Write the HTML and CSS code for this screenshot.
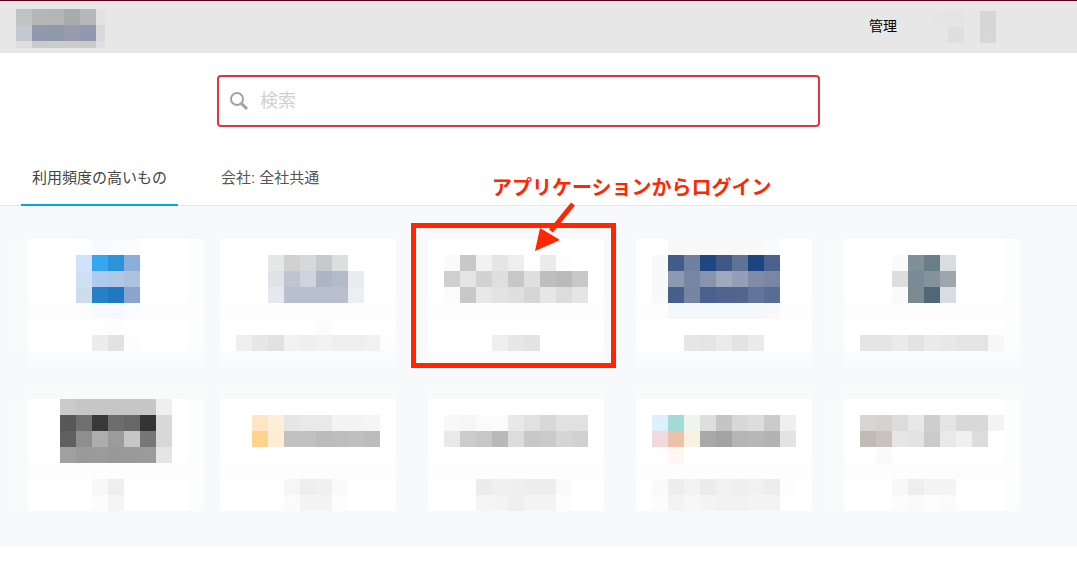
FILE: index.html
```html
<!DOCTYPE html>
<html lang="ja">
<head>
    <meta charset="UTF-8">
    <meta name="viewport" content="width=device-width, initial-scale=1.0">
    <title>アプリケーション</title>
    <link rel="stylesheet" href="styles.css">
</head>
<body>
    <header class="header">
        <a href="#" class="logo" aria-label="ホーム"><svg class="mosaic" data-tile="logo" width="89" height="39"></svg></a>
        <nav class="header-nav">
            <a href="#">管理</a>
            <a href="#" class="account" aria-label="アカウント"><svg class="mosaic" data-tile="account" width="64" height="34"></svg></a>
        </nav>
    </header>

    <form class="search" role="search">
        <svg class="search-icon" width="20" height="20" viewBox="0 0 20 20" fill="none" stroke="#a0a2a4">
            <circle cx="8" cy="8" r="6" stroke-width="2"/>
            <path d="M12.5 12.5L18 18" stroke-width="3"/>
        </svg>
        <input type="search" placeholder="検索" aria-label="検索">
    </form>

    <div class="tabs" role="tablist">
        <button type="button" class="tab active" role="tab" aria-selected="true">利用頻度の高いもの</button>
        <button type="button" class="tab" role="tab" aria-selected="false">会社: 全社共通</button>
    </div>

    <main class="apps">
        <a href="#" class="card" aria-label="アプリ 1"><svg class="mosaic" data-tile="app1" width="176" height="112"></svg></a>
        <a href="#" class="card" aria-label="アプリ 2"><svg class="mosaic" data-tile="app2" width="176" height="112"></svg></a>
        <div class="card-wrap">
            <a href="#" class="card" aria-label="アプリ 3"><svg class="mosaic" data-tile="app3" width="176" height="112"></svg></a>
            <div class="callout-box"></div>
            <svg class="callout-arrow" width="46" height="54" viewBox="0 0 46 54">
                <path d="M42 4L20 31" stroke="#ff2600" stroke-width="5"/>
                <path d="M4 51L9 28L29 40Z" fill="#ff2600"/>
            </svg>
            <div class="callout-text">アプリケーションからログイン</div>
        </div>
        <a href="#" class="card" aria-label="アプリ 4"><svg class="mosaic" data-tile="app4" width="176" height="112"></svg></a>
        <a href="#" class="card" aria-label="アプリ 5"><svg class="mosaic" data-tile="app5" width="176" height="112"></svg></a>
        <a href="#" class="card" aria-label="アプリ 6"><svg class="mosaic" data-tile="app6" width="176" height="112"></svg></a>
        <a href="#" class="card" aria-label="アプリ 7"><svg class="mosaic" data-tile="app7" width="176" height="112"></svg></a>
        <a href="#" class="card" aria-label="アプリ 8"><svg class="mosaic" data-tile="app8" width="176" height="112"></svg></a>
        <a href="#" class="card" aria-label="アプリ 9"><svg class="mosaic" data-tile="app9" width="176" height="112"></svg></a>
        <a href="#" class="card" aria-label="アプリ 10"><svg class="mosaic" data-tile="app10" width="176" height="112"></svg></a>
    </main>

    <script src="script.js"></script>
</body>
</html>
```
FILE: styles.css
```css
* {
    box-sizing: border-box;
}

body {
    margin: 0;
    font-family: "Liberation Sans", "Noto Sans CJK JP", sans-serif;
    font-size: 15px;
    color: #444;
    background-color: #fff;
}

a {
    color: inherit;
    text-decoration: none;
}

.header {
    display: flex;
    justify-content: space-between;
    align-items: flex-start;
    height: 53px;
    padding: 8px 81px 0 16px;
    border-top: 1px solid #5a0014;
    background-color: #e7e7e7;
}

.header-nav {
    display: flex;
    gap: 35px;
    padding-top: 2px;
    font-size: 14px;
    line-height: 30px;
    color: #000;
}

.mosaic {
    display: block;
    overflow: visible;
    shape-rendering: crispEdges;
}

.search {
    display: flex;
    align-items: center;
    gap: 11px;
    width: 56%;
    height: 52px;
    margin: 22px 0 0 217px;
    padding: 0 10px;
    border: 2px solid #dc3540;
    border-radius: 4px;
}

.search-icon {
    flex: none;
}

.search input {
    flex: 1;
    padding: 0;
    border: none;
    outline: none;
    background: none;
    font: inherit;
    font-size: 18px;
    color: #444;
}

.search input::placeholder {
    color: #d0d0d0;
}

.tabs {
    display: flex;
    gap: 32px;
    margin-top: 22px;
    padding-left: 21px;
    border-bottom: 1px solid #e6e7e8;
}

.tab {
    height: 57px;
    margin-bottom: -1px;
    padding: 0 11px;
    border: none;
    border-bottom: 2px solid transparent;
    background: none;
    font: inherit;
    color: #555;
    cursor: pointer;
}

.tab.active {
    border-bottom-color: #00a7e1;
    color: #444;
}

.apps {
    display: grid;
    grid-template-columns: 192px repeat(4, 208px);
    row-gap: 48px;
    padding: 33px 0 35px 28px;
    background-color: #f8f9fb;
}

.card {
    display: block;
    width: 176px;
    background-color: #fff;
}

.card-wrap {
    position: relative;
}

/* red callout over the third card */
.callout-box {
    position: absolute;
    top: -16px;
    left: -17px;
    width: 205px;
    height: 145px;
    border: 5px solid #ff2600;
    pointer-events: none;
}

.callout-arrow {
    position: absolute;
    top: -39px;
    left: 103px;
}

.callout-text {
    position: absolute;
    top: -67px;
    left: 64px;
    font-family: "Noto Sans CJK JP", sans-serif;
    font-size: 20px;
    font-weight: bold;
    line-height: 30px;
    white-space: nowrap;
    color: #ff2600;
}
```
FILE: script.js
```js
const CELL = 16;

// Each run is [column, row, colours]; two digits mean a grey
const tiles = {
    logo: [
        [0, 0, 'c1c2c3 b5b6b7 b4b5b6 aaabac b6b7b8 e2e2e2'],
        [0, 1, 'c3c7d0 9099ad 9099aa 979bae 9099ae d7d9de'],
        [0, 2, 'df c9cbca cbcdcc cbcccb cacccb df']
    ],
    account: [
        [0, 0, 'e5 e4 e7 d6'],
        [0, 1, 'e6 df e7 d7']
    ],
    app1: [
        [3, 0, 'fdfeff f7fbff f9fbff fcfcfe'],
        [3, 1, 'cfe4fc 35a7f2 2b93da 8aadda'],
        [3, 2, 'cee0f6 adcbee b0c8e6 adc2e0'],
        [3, 3, 'd0dcec 2481c9 1f79c1 8aa3cf'],
        [3, 4, 'fcfcfd f7f9fd f5f8fd fafbfe'],
        [4, 5, 'fe fd'],
        [4, 6, 'ec e2 fd']
    ],
    app2: [
        [3, 1, 'e5e8e6 d1 d7d8d9 c8c9ca dddfde'],
        [3, 2, 'dfe3e8 bec5d2 ced3dd abb5c5 b2bcc9 e9ebf0'],
        [3, 3, 'e5e8ed b8c0ce b8c0ce b8c0ce b8c0ce eceef3'],
        [6, 5, 'fc'],
        [1, 6, 'ef e7 e1 f1 ef f2 ee ee f1 fd']
    ],
    app3: [
        [1, 1, 'fa c8 f2 e5 ee ff eb fd'],
        [1, 2, 'cf e5 d2 df c7 df be ba c8'],
        [1, 3, 'fb c8 e8 e3 df d6 e6 dc e5'],
        [4, 6, 'ef e7 e3']
    ],
    app4: [
        [2, 0, 'f8 f8 f8 f8 f8 f8 f8fafd'],
        [1, 1, 'f7f9fb 425b8a 7080a0 1e4781 415787 607397 1c447f 4a608e'],
        [1, 2, 'f7f9fb 8e98b0 7886a5 8894af a0a8bd 949eb6 808ba8 7986a5'],
        [1, 3, 'f7f9fb 485f8c 7884a4 4a6190 50648f 52658f 627499 596c94'],
        [2, 4, 'f5f8fb f5f8fb f5f8fb f5f8fb f5f8fb f5f8fb f8'],
        [3, 6, 'e6 e4 eb e3 ea']
    ],
    app5: [
        [3, 1, 'f9fbfa 818f99 6a7e89 d9dde1'],
        [3, 2, 'dcddde 7c8a96 84929b 9da5ae'],
        [3, 3, 'f9fbfa 7b8990 506777 d9dde1'],
        [1, 6, 'e5 e5 ea e3 ea e8 e4 e4 f7']
    ],
    app6: [
        [2, 0, 'ca c6 c6 c6 c6 c6 ef'],
        [2, 1, '58 6f 38 6d 67 34 d8'],
        [2, 2, '60 8e ad 9b c6 77 d8'],
        [2, 3, 'a0 9a 9b 99 9a 9b e5'],
        [4, 5, 'f8 ee'],
        [4, 6, 'fc f5']
    ],
    app7: [
        [2, 1, 'ffe5c4 ffeeda e6 e9 e9 f4 f3 f5'],
        [2, 2, 'ffd38d feecd4 c1 c1 bb bd c0 bc'],
        [4, 5, 'f6 ee f0 fa'],
        [4, 6, 'fb f4 f4 fd']
    ],
    app8: [
        [1, 1, 'f8 f6 fb fb e8 e1 d8 e1 e1'],
        [1, 2, 'e9 cc c7 b9 dc c8 ca d5 d1'],
        [3, 5, 'ec f0 ef ed ed fa'],
        [3, 6, 'f5 f4 ef f4 f4 fd']
    ],
    app9: [
        [1, 1, 'ddf1fc a3dad3 eef5ef de c5 d8 dd cb ef'],
        [1, 2, 'f2d8e1 edc0aa faf1e5 a9 a3 b5 b7 b3 e3'],
        [1, 3, 'fffdfd fff5f2'],
        [1, 5, 'fa ed f3 ec f1 ef f1 ed fd'],
        [1, 6, 'fc f3 f7 f4 f2 f2 f4 f4']
    ],
    app10: [
        [1, 1, 'd7d6d5 d6d2cf dc e8 ce e4 d8 d8 f4'],
        [1, 2, 'c2bbb4 c8c3bf e6 e3 cb e9 f0 dc'],
        [2, 3, 'fa'],
        [3, 5, 'f8 ee f4 f4'],
        [3, 6, 'fc fa fd fb']
    ]
};

function addRect(svg, x, y, width, height, fill) {
    const rect = document.createElementNS('http://www.w3.org/2000/svg', 'rect');
    rect.setAttribute('x', x);
    rect.setAttribute('y', y);
    rect.setAttribute('width', width);
    rect.setAttribute('height', height);
    rect.setAttribute('fill', fill);
    svg.appendChild(rect);
}

document.querySelectorAll('.mosaic').forEach(function(svg) {
    const name = svg.dataset.tile;
    const maxX = Number(svg.getAttribute('width'));
    const maxY = Number(svg.getAttribute('height'));

    // Faint edges round the cards
    if (name.startsWith('app')) {
        const upperRow = Number(name.slice(3)) <= 5;
        addRect(svg, 0, -CELL, maxX, CELL, upperRow ? '#f7f8fa' : '#f9fbfa');
        if (upperRow) {
            addRect(svg, 0, maxY, maxX, CELL, '#fafbfd');
        }
        if (['app1', 'app5', 'app6', 'app10'].includes(name)) {
            addRect(svg, -CELL, 0, CELL, maxY, '#f9fbfa');
            addRect(svg, maxX - CELL, 0, CELL, maxY, '#fcfefd');
        }
        addRect(svg, 0, 4 * CELL, maxX, CELL, '#fdfdfd');
    }

    tiles[name].forEach(function([column, row, colours]) {
        colours.split(' ').forEach(function(colour, i) {
            const x = (column + i) * CELL;
            const y = row * CELL;
            const fill = '#' + (colour.length === 2 ? colour.repeat(3) : colour);
            addRect(svg, x, y, Math.min(CELL, maxX - x), Math.min(CELL, maxY - y), fill);
        });
    });
});
```
